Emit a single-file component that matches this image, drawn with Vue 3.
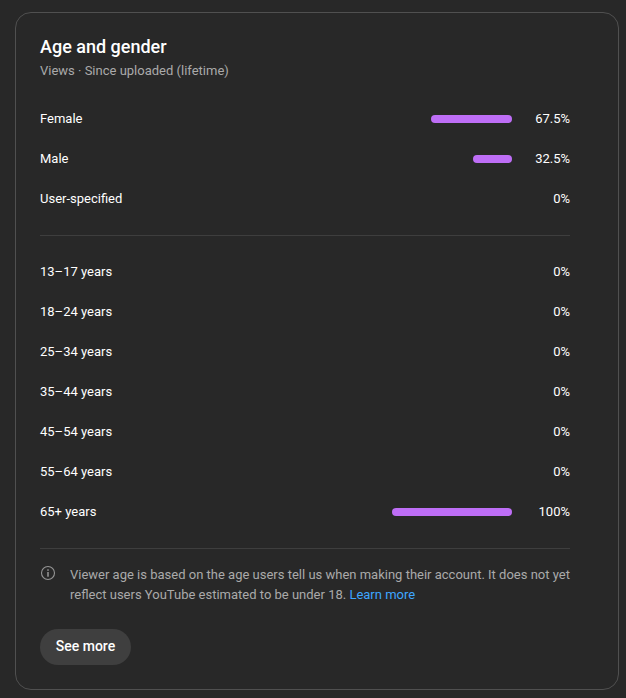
<script setup>
const genders = [
  { label: 'Female', value: 67.5 },
  { label: 'Male', value: 32.5 },
  { label: 'User-specified', value: 0 }
]
const ages = [
  { label: '13–17 years', value: 0 },
  { label: '18–24 years', value: 0 },
  { label: '25–34 years', value: 0 },
  { label: '35–44 years', value: 0 },
  { label: '45–54 years', value: 0 },
  { label: '55–64 years', value: 0 },
  { label: '65+ years', value: 100 }
]
</script>

<template>
  <div class="page">
    <section class="card">
      <h2 class="title">Age and gender</h2>
      <div class="subtitle">Views · Since uploaded (lifetime)</div>

      <ul class="rows">
        <li v-for="item in genders" :key="item.label" class="row">
          <span class="label">{{ item.label }}</span>
          <span class="track">
            <span v-if="item.value" class="bar" :style="{ width: item.value + '%' }"></span>
          </span>
          <span class="value">{{ item.value }}%</span>
        </li>
      </ul>

      <div class="divider"></div>

      <ul class="rows ages">
        <li v-for="item in ages" :key="item.label" class="row">
          <span class="label">{{ item.label }}</span>
          <span class="track">
            <span v-if="item.value" class="bar" :style="{ width: item.value + '%' }"></span>
          </span>
          <span class="value">{{ item.value }}%</span>
        </li>
      </ul>

      <div class="divider"></div>

      <div class="note">
        <svg class="info" viewBox="0 0 16 16" width="16" height="16" fill="none">
          <circle cx="8" cy="8" r="6.5" stroke="#959595" stroke-width="1.1" />
          <rect x="7.3" y="7" width="1.4" height="4.7" fill="#a0a0a0" />
          <rect x="7.3" y="4.3" width="1.4" height="1.5" fill="#a0a0a0" />
        </svg>
        <p class="note-text">
          Viewer age is based on the age users tell us when making their account. It does not yet
          reflect users YouTube estimated to be under 18.
          <a href="#" class="link">Learn more</a>
        </p>
      </div>

      <button class="more" type="button">See more</button>
    </section>
  </div>
</template>

<style>
html,
body {
  background: #282828;
}
</style>

<style scoped>
.page {
  box-sizing: border-box;
  width: 626px;
  height: 698px;
  padding: 12px 7px 8px 15px;
  background: #282828;
  font-family: Roboto, "Liberation Sans", sans-serif;
}

.card {
  box-sizing: border-box;
  height: 678px;
  padding: 23px 48px 0 24px;
  border: 1px solid #505050;
  border-radius: 16px;
  background: #282828;
}

.title {
  margin: 0;
  font-size: 18px;
  line-height: 22px;
  font-weight: 500;
  color: #fff;
}

.subtitle {
  margin-top: 3px;
  font-size: 13px;
  line-height: 20px;
  color: #aaa;
}

.rows {
  margin: 18px 0 0;
  padding: 0;
  list-style: none;
}

.rows.ages {
  margin-top: 16px;
}

.row {
  display: flex;
  align-items: center;
  height: 40px;
  font-size: 13px;
  color: #fff;
}

.label {
  flex: 1;
  padding-bottom: 2px;
}

.track {
  display: flex;
  justify-content: flex-end;
  width: 120px;
}

.bar {
  height: 8px;
  border-radius: 4px;
  background: #be6ef6;
}

.value {
  width: 58px;
  padding-bottom: 2px;
  text-align: right;
}

.divider {
  margin-top: 16px;
  height: 1px;
  background: #3e3e3e;
}

.note {
  display: flex;
  gap: 14px;
  margin-top: 16px;
}

.info {
  flex: none;
}

.note-text {
  margin: 0;
  font-size: 13px;
  line-height: 20px;
  color: #aaa;
}

.link {
  color: #3ea6ff;
  text-decoration: none;
}

.more {
  display: block;
  width: 91px;
  height: 36px;
  margin-top: 24px;
  padding: 0 0 2px;
  border: 0;
  border-radius: 18px;
  background: #3f3f3f;
  color: #fff;
  font-family: inherit;
  font-size: 14px;
  font-weight: 500;
}
</style>
